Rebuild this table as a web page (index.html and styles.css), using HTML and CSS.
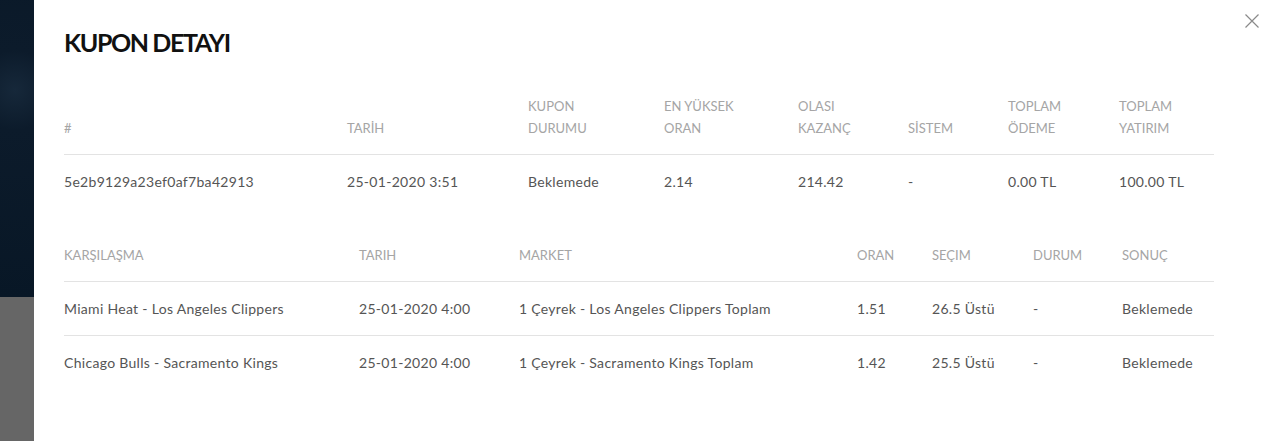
FILE: index.html
```html
<!DOCTYPE html>
<html lang="tr">
<head>
<meta charset="utf-8">
<title>Kupon Detayı</title>
<link rel="stylesheet" href="styles.css">
</head>
<body>
<div class="page">
  <div class="backdrop">
    <div class="backdrop-top"></div>
    <div class="backdrop-bottom"></div>
  </div>
  <div class="modal">
    <button class="close" aria-label="Kapat">
      <svg width="14" height="14" viewBox="0 0 14 14"><path d="M0.5 0.5 L13.5 13.5 M13.5 0.5 L0.5 13.5" stroke="#8a8a8a" stroke-width="1.2" fill="none"/></svg>
    </button>
    <h1 class="title">KUPON DETAYI</h1>

    <div class="table t1">
      <div class="row head">
        <div class="cell">#</div>
        <div class="cell">TARİH</div>
        <div class="cell">KUPON<br>DURUMU</div>
        <div class="cell">EN YÜKSEK<br>ORAN</div>
        <div class="cell">OLASI<br>KAZANÇ</div>
        <div class="cell">SİSTEM</div>
        <div class="cell">TOPLAM<br>ÖDEME</div>
        <div class="cell">TOPLAM<br>YATIRIM</div>
      </div>
      <div class="row body last">
        <div class="cell">5e2b9129a23ef0af7ba42913</div>
        <div class="cell">25-01-2020 3:51</div>
        <div class="cell">Beklemede</div>
        <div class="cell">2.14</div>
        <div class="cell">214.42</div>
        <div class="cell">-</div>
        <div class="cell">0.00 TL</div>
        <div class="cell">100.00 TL</div>
      </div>
    </div>

    <div class="table t2">
      <div class="row head">
        <div class="cell">KARŞILAŞMA</div>
        <div class="cell">TARIH</div>
        <div class="cell">MARKET</div>
        <div class="cell">ORAN</div>
        <div class="cell">SEÇIM</div>
        <div class="cell">DURUM</div>
        <div class="cell">SONUÇ</div>
      </div>
      <div class="row body">
        <div class="cell">Miami Heat - Los Angeles Clippers</div>
        <div class="cell">25-01-2020 4:00</div>
        <div class="cell">1 Çeyrek - Los Angeles Clippers Toplam</div>
        <div class="cell">1.51</div>
        <div class="cell">26.5 Üstü</div>
        <div class="cell">-</div>
        <div class="cell">Beklemede</div>
      </div>
      <div class="row body last">
        <div class="cell">Chicago Bulls - Sacramento Kings</div>
        <div class="cell">25-01-2020 4:00</div>
        <div class="cell">1 Çeyrek - Sacramento Kings Toplam</div>
        <div class="cell">1.42</div>
        <div class="cell">25.5 Üstü</div>
        <div class="cell">-</div>
        <div class="cell">Beklemede</div>
      </div>
    </div>
  </div>
</div>
</body>
</html>
```
FILE: styles.css
```css
* { box-sizing: border-box; }
html, body { margin: 0; padding: 0; }
body {
  font-family: "Lato", "Noto Sans", sans-serif;
  width: 1271px;
  height: 441px;
  overflow: hidden;
  background: #fff;
}
.page {
  display: flex;
  height: 441px;
}
.backdrop {
  width: 34px;
  flex: none;
  display: flex;
  flex-direction: column;
}
.backdrop-top {
  height: 297px;
  background: radial-gradient(circle at 15px 90px, #16283a 0, #0c1b2b 40px, #081726 100%);
}
.backdrop-bottom {
  flex: 1;
  background: #666666;
}
.modal {
  flex: 1;
  position: relative;
  background: #fff;
  padding: 25px 57px 0 30px;
}
.close {
  position: absolute;
  top: 14px;
  right: 12px;
  width: 14px;
  height: 14px;
  padding: 0;
  border: 0;
  background: none;
  display: block;
}
.close svg { display: block; }
.title {
  margin: 0;
  font-size: 25px;
  line-height: 34px;
  font-weight: 700;
  color: #111;
  letter-spacing: -1.4px;
}
.table { width: 1150px; }
.t1 { margin-top: 20px; }
.t2 { margin-top: 20px; }
.row {
  display: grid;
  border-bottom: 1px solid #e3e3e3;
}
.row.last { border-bottom: 0; }
.t1 .row { grid-template-columns: 283px 181px 136px 134px 110px 100px 111px 95px; }
.t2 .row { grid-template-columns: 295px 160px 338px 75px 101px 89px 92px; }
.cell {
  padding: 16px 0 15px;
  line-height: 22px;
  white-space: nowrap;
}
.head .cell {
  font-size: 13px;
  color: #a5a5a5;
  align-self: end;
}
.body .cell {
  font-size: 14px;
  letter-spacing: 0.3px;
  color: #555;
}
```
